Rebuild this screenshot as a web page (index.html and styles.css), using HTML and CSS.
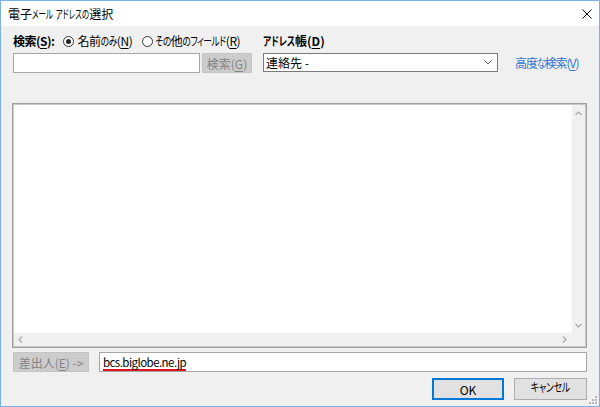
FILE: index.html
```html
<!DOCTYPE html>
<html lang="ja">
<head>
<meta charset="utf-8">
<title>電子メール アドレスの選択</title>
<link rel="stylesheet" href="styles.css">
</head>
<body>
<div class="window">
  <div class="titlebar">
    <span class="title">電子<span class="kn">メール</span> <span class="kn">アドレスの</span>選択</span>
    <svg class="close" width="10" height="10" viewBox="0 0 10 10"><path d="M0.5 0.5 L9.5 9.5 M9.5 0.5 L0.5 9.5" stroke="#111" stroke-width="1" fill="none"/></svg>
  </div>
  <div class="content">
    <div class="top">
      <div class="search-col">
        <div class="label-row">
          <span class="bold search-label">検索(<u>S</u>):</span>
          <span class="radio checked"></span><span class="rlabel">名前<span class="kn">のみ</span>(<u>N</u>)</span>
          <span class="radio second"></span><span class="rlabel"><span class="kn">その</span>他<span class="kn">のフィールド</span>(<u>R</u>)</span>
        </div>
        <div class="input-row">
          <div class="textbox search-box"></div>
          <div class="btn disabled search-btn">検索(<u>G</u>)</div>
        </div>
      </div>
      <div class="book-col">
        <div class="label-row"><span class="bold"><span class="kn">アドレス</span>帳(<u>D</u>)</span></div>
        <div class="combo">
          <span>連絡先 -</span>
          <svg class="chev" width="8" height="5" viewBox="0 0 8 5"><polyline points="0.5,0.5 4,4 7.5,0.5" stroke="#606060" fill="none" stroke-width="1"/></svg>
        </div>
      </div>
      <div class="link">高度<span class="kn">な</span>検索(<u>V</u>)</div>
    </div>

    <div class="list">
      <div class="list-main">
        <div class="list-area"></div>
        <div class="vscroll">
          <svg width="7" height="5" viewBox="0 0 7 5"><polyline points="0.5,4 3.5,1 6.5,4" stroke="#a8a8a8" fill="none" stroke-width="1.2"/></svg>
          <svg width="7" height="5" viewBox="0 0 7 5"><polyline points="0.5,1 3.5,4 6.5,1" stroke="#a8a8a8" fill="none" stroke-width="1.2"/></svg>
        </div>
      </div>
      <div class="list-bottom">
        <div class="hscroll">
          <svg width="5" height="7" viewBox="0 0 5 7"><polyline points="4,0.5 1,3.5 4,6.5" stroke="#a8a8a8" fill="none" stroke-width="1.2"/></svg>
          <svg width="5" height="7" viewBox="0 0 5 7"><polyline points="1,0.5 4,3.5 1,6.5" stroke="#a8a8a8" fill="none" stroke-width="1.2"/></svg>
        </div>
        <div class="corner"></div>
      </div>
    </div>

    <div class="from-row">
      <div class="btn disabled from-btn">差出人(<u>E</u>) -&gt;</div>
      <div class="textbox email-box"><span class="email">bcs.biglobe.ne.jp</span></div>
    </div>

    <div class="button-row">
      <div class="btn default ok-btn">OK</div>
      <div class="btn cancel-btn"><span class="kn">キャンセル</span></div>
    </div>
  </div>
  <svg class="grip" width="8" height="8" viewBox="0 0 8 8">
    <rect x="6" y="0" width="2" height="2" fill="#b8b8b8"/>
    <rect x="3" y="3" width="2" height="2" fill="#b8b8b8"/>
    <rect x="6" y="3" width="2" height="2" fill="#b8b8b8"/>
    <rect x="0" y="6" width="2" height="2" fill="#b8b8b8"/>
    <rect x="3" y="6" width="2" height="2" fill="#b8b8b8"/>
    <rect x="6" y="6" width="2" height="2" fill="#b8b8b8"/>
  </svg>
</div>
</body>
</html>
```

FILE: styles.css
```css
* { box-sizing: border-box; }
html, body { margin: 0; padding: 0; }
body {
  width: 600px;
  height: 407px;
  overflow: hidden;
  font-family: "Noto Sans CJK JP", "Noto Sans", sans-serif;
  font-size: 12px;
  font-feature-settings: "palt";
  color: #000;
  background: #f0f0f0;
}
u { text-underline-offset: 2px; text-decoration-thickness: 1px; }

/* narrow kana, like the compact UI font of the original */
.kn {
  display: inline-block;
  font-size: 8.7px;
  line-height: 1;
  transform: scaleY(1.38);
  transform-origin: 50% 93%;
  vertical-align: baseline;
}

.window {
  position: relative;
  width: 600px;
  height: 407px;
  border: 1px solid #79b0e8;
  background: #f0f0f0;
  display: flex;
  flex-direction: column;
}

.titlebar {
  height: 25px;
  background: #fff;
  display: flex;
  align-items: center;
  justify-content: space-between;
  padding: 0 7px 0 7px;
  flex: none;
}
.title { font-size: 12px; line-height: 14px; }
.title .kn { font-size: 7.5px; transform: scaleY(1.6); }

.content {
  flex: 1;
  display: flex;
  flex-direction: column;
  padding: 7px 12px 6px 11px;
}

.top {
  display: flex;
  align-items: flex-end;
  height: 40px;
  flex: none;
}
.label-row {
  height: 16px;
  display: flex;
  align-items: center;
  line-height: 16px;
  white-space: nowrap;
}
.bold { font-weight: bold; }
.search-label { letter-spacing: -0.5px; }
.rlabel { letter-spacing: -0.4px; }

.search-col { width: 239px; margin-left: 1px; display: flex; flex-direction: column; gap: 4px; }
.radio {
  width: 11px;
  height: 11px;
  border: 1px solid #333;
  border-radius: 50%;
  background: #fff;
  margin-left: 9px;
  margin-right: 3px;
  position: relative;
  flex: none;
}
.radio.checked::after {
  content: "";
  position: absolute;
  left: 2px; top: 2px;
  width: 5px; height: 5px;
  border-radius: 50%;
  background: #222;
}
.radio.second { margin-left: 10px; margin-right: 2px; }

.input-row { display: flex; height: 20px; gap: 2px; }
.textbox {
  background: #fff;
  border: 1px solid #a6a6a6;
}
.search-box { width: 187px; height: 20px; }

.btn {
  display: flex;
  align-items: center;
  justify-content: center;
  background: #e1e1e1;
  border: 1px solid #adadad;
  white-space: nowrap;
}
.btn.disabled {
  background: #cccccc;
  border-color: #c4c4c4;
  color: #838383;
}
.search-btn { width: 50px; height: 20px; }

.book-col { width: 235px; margin-left: 11px; display: flex; flex-direction: column; gap: 4px; }
.combo {
  height: 19px;
  margin-bottom: 1px;
  background: #fff;
  border: 1px solid #7a7a7a;
  display: flex;
  align-items: center;
  justify-content: space-between;
  padding: 0 5px 0 2px;
}
.chev { display: block; }

.link {
  margin-left: 17px;
  height: 20px;
  line-height: 20px;
  color: #2f74cf;
  white-space: nowrap;
  letter-spacing: -1px;
}

.list {
  margin-top: 30px;
  height: 245px;
  flex: none;
  border: 1px solid #a0a0a0;
  box-shadow: inset 1px 1px 0 #c8c8c8, inset -1px -1px 0 #c8c8c8;
  padding: 1px;
  display: flex;
  flex-direction: column;
}
.list-main { flex: 1; display: flex; }
.list-area { flex: 1; background: #fff; }
.vscroll {
  width: 13px;
  background: #f0f0f0;
  display: flex;
  flex-direction: column;
  justify-content: space-between;
  align-items: center;
  padding: 6px 0 5px 0;
}
.vscroll svg, .hscroll svg { display: block; }
.list-bottom { height: 13px; display: flex; }
.hscroll {
  flex: 1;
  display: flex;
  align-items: center;
  justify-content: space-between;
  padding: 0 5px 0 4px;
}
.corner { width: 13px; }

.from-row {
  margin-top: 4px;
  height: 21px;
  display: flex;
  flex: none;
}
.from-btn { width: 76px; height: 20px; margin-left: 1px; }
.email-box {
  margin-left: 10px;
  flex: 1;
  height: 20px;
  display: flex;
  align-items: center;
  padding-left: 3px;
}
.email {
  font-size: 11.5px;
  line-height: 14px;
  letter-spacing: -0.55px;
  border-bottom: 2px solid #e0141e;
  margin-top: 1px;
}

.button-row {
  margin-top: 5px;
  height: 22px;
  display: flex;
  justify-content: flex-end;
  gap: 10px;
  flex: none;
}
.ok-btn { width: 72px; height: 22px; border: 2px solid #0078d7; }
.cancel-btn { width: 73px; height: 22px; }

.grip { position: absolute; right: 2px; bottom: 2px; }
```
